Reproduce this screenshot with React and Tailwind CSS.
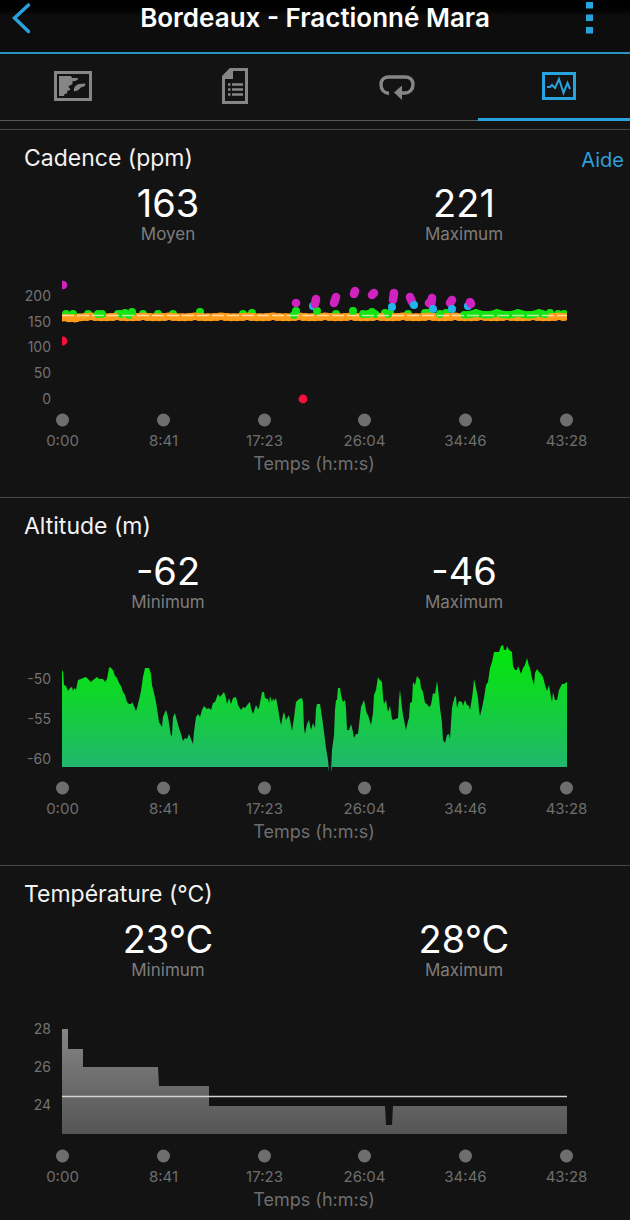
import React from 'react';

const times = ['0:00', '8:41', '17:23', '26:04', '34:46', '43:28'];
const tickX = [62.5, 163.5, 264.5, 364.5, 465.5, 566.5];

const altitude = `63,35 64,50 66,51 68,56 70,53 72,52 73,56 74,53 76,55 78,45 81,44 83,43 86,42 88,44 91,47 93,45 97,42 99,44
103,44 105,47 107,44 109,33 110,32 113,35 115,41 117,43 119,48 121,51 123,57 125,60 127,67 129,69 131,69 132,67 134,71 136,76
137,73 139,65 141,56 143,42 145,33 149,33 151,39 152,50 154,58 156,67 158,80 159,87 162,92 163,82 165,77 166,75 168,82 171,101
172,100 173,82 175,78 177,86 179,93 181,99 183,106 185,103 187,104 189,99 191,104 193,109 194,97 196,82 198,79 200,82 202,75
204,71 207,74 209,73 211,75 213,68 215,67 218,59 220,62 224,57 226,63 227,69 229,63 231,69 233,63 236,62 238,70 241,75 243,72
245,73 248,69 250,67 251,73 253,79 255,73 256,70 258,74 259,73 261,63 262,57 264,57 265,63 268,64 269,68 270,61 272,67 273,63
274,66 276,63 278,73 280,86 281,90 283,80 284,77 286,85 289,80 290,85 292,96 294,83 296,67 299,64 302,63 303,67 304,93 305,99
307,89 309,85 311,95 313,88 315,93 316,74 317,69 320,69 322,82 324,97 326,113 328,125 329,137 331,137 332,115 334,100 335,75
336,65 337,65 338,53 340,53 341,60 343,67 345,65 346,73 347,95 349,95 351,89 353,97 354,103 356,99 358,99 359,90 361,72 364,65
366,75 367,79 368,80 371,90 373,78 374,60 376,55 378,42 379,44 382,47 383,62 384,69 386,65 388,77 390,71 392,84 393,85 398,83
399,65 400,55 402,73 403,80 405,90 406,95 408,86 409,83 410,68 412,67 413,47 415,50 417,41 420,45 421,53 423,57 425,68 427,69
429,72 431,70 433,58 435,59 437,46 438,53 440,73 442,88 443,105 445,108 447,100 449,99 450,104 452,73 453,68 455,61 456,62
457,73 459,66 462,67 463,71 465,65 467,70 469,71 470,75 472,63 473,55 474,44 476,53 478,63 479,75 480,81 482,73 484,63 486,50
488,47 490,33 492,27 494,17 499,17 501,11 503,10 504,15 506,15 507,11 509,15 512,17 513,31 515,35 517,35 518,31 521,39 523,33
525,30 527,23 529,31 530,33 532,43 534,50 535,38 537,34 539,37 541,39 543,42 545,50 547,56 548,53 549,50 551,62 552,67 553,57
555,65 557,65 559,55 562,49 564,49 567,47`;

// green points partly covered by the orange band
const greenBack = [
  [66, 44], [73, 44], [88, 44], [118, 44], [143, 44], [158, 44], [173, 44], [200, 42], [243, 44], [252, 43],
  [336, 44], [385, 43], [390, 43], [408, 44], [425, 43], [428, 43], [446, 43], [550, 43], [558, 44], [564, 44],
];
const greenFront = [
  [98, 44], [102, 44], [121, 44], [125, 43], [129, 45], [132, 42], [296, 41], [294, 45], [317, 41], [353, 41],
  [363, 44], [368, 44], [372, 42], [375, 44], [388, 44], [440, 44],
];
const magenta = [
  '63,15 63,15', '296,33 296,33', '316,29 315,34', '336,27 334,33', '355,21 354,24', '374,23 372,25',
  '394,23 393,30', '410,27 412,32', '432,28 431,34', '429,33 431,33', '452,30 450,33', '470,32 471,34',
];
const blue = [[392, 37], [414, 35], [433, 39], [452, 39]];
const blueBehind = [[313, 36], [468, 36]];
const red = [[63, 71], [303, 129]];

const orange = [];
for (let x = 63; x <= 566; x += 2) {
  const wobble = ((x * x * 7) % 13) / 9;
  orange.push([x, (x < 78 ? 47.5 : 46.3) + wobble]);
}
const greenRun = [];
for (let x = 464; x <= 545; x += 3) {
  greenRun.push([x, 42.8 + ((x * x * 5) % 7) / 3]);
}

const Dots = ({ points, color, r = 4 }) => (
  <g fill={color}>
    {points.map(([x, y], i) => <circle key={i} cx={x} cy={y} r={r} />)}
  </g>
);

const CadencePlot = () => (
  <g transform="translate(0 141)">
    <clipPath id="cadenceClip"><rect x="62" y="0" width="505" height="140" /></clipPath>
    <g clipPath="url(#cadenceClip)">
      <Dots points={blueBehind} color="#22b4ee" />
      <Dots points={greenBack} color="#12e312" />
      <Dots points={orange} color="#ff9c1a" r={3.8} />
      <Dots points={greenFront} color="#12e312" />
      <Dots points={greenRun} color="#12e312" r={3.8} />
      <path d="M62 45.5H567" stroke="#fff3d6" strokeOpacity="0.7" strokeWidth="1.4" strokeDasharray="12 3" />
      {magenta.map((points) => (
        <polyline key={points} points={points} fill="none" stroke="#cf22bf" strokeWidth="8.6" strokeLinecap="round" />
      ))}
      <Dots points={blue} color="#22b4ee" />
      <Dots points={red} color="#fa0f3c" r={4.4} />
    </g>
  </g>
);

const AltitudePlot = () => (
  <g transform="translate(0 138)">
    <defs>
      <linearGradient id="altitudeFill" gradientUnits="userSpaceOnUse" x1="0" y1="10" x2="0" y2="132">
        <stop offset="0" stopColor="#00e808" />
        <stop offset="0.3" stopColor="#0cdb20" />
        <stop offset="1" stopColor="#22b66e" />
      </linearGradient>
    </defs>
    <polygon points={`62,132 62,37 ${altitude} 567,132 332,132 331,137 329,137 328,132`} fill="url(#altitudeFill)" />
  </g>
);

const TemperaturePlot = () => (
  <g>
    <defs>
      <linearGradient id="temperatureFill" x1="0" y1="0" x2="0" y2="1">
        <stop offset="0" stopColor="#858585" />
        <stop offset="1" stopColor="#555555" />
      </linearGradient>
    </defs>
    <path
      d="M62 269V164H68V184H83V202H158L159 221H209V241H385L386 260H392L393 241H567V269Z"
      fill="url(#temperatureFill)"
    />
    <path d="M62 231.5H567" stroke="#d4d4d4" strokeWidth="1.4" />
  </g>
);

const sections = [
  {
    title: 'Cadence (ppm)',
    help: true,
    stats: [['163', 'Moyen'], ['221', 'Maximum']],
    yLabels: [['200', 167], ['150', 193], ['100', 218], ['50', 244], ['0', 270]],
    Plot: CadencePlot,
  },
  {
    title: 'Altitude (m)',
    stats: [['-62', 'Minimum'], ['-46', 'Maximum']],
    yLabels: [['-50', 182], ['-55', 222], ['-60', 262]],
    Plot: AltitudePlot,
  },
  {
    title: 'Température (°C)',
    stats: [['23°C', 'Minimum'], ['28°C', 'Maximum']],
    yLabels: [['28', 164], ['26', 202], ['24', 240]],
    Plot: TemperaturePlot,
  },
];

const Section = ({ title, help, stats, yLabels, Plot }) => (
  <section className="border-t border-[#484848]">
    <div className="flex items-center justify-between pl-6 pr-[6px] pt-3 h-[44px]">
      <h2 className="text-[23px] leading-8 text-[#f2f2f2]">{title}</h2>
      {help && <a href="#aide" className="text-[20px] leading-8 pt-1 text-[#2f9fdc]">Aide</a>}
    </div>

    <dl className="grid grid-cols-2 pl-5 pr-[18px] pt-[9px] h-[76px] text-center">
      {stats.map(([value, label]) => (
        <div key={label} className="flex flex-col-reverse justify-end">
          <dt className="text-[17px] leading-[22px] text-[#7d7d7d]">{label}</dt>
          <dd className="text-[38px] leading-10 text-white">{value}</dd>
        </div>
      ))}
    </dl>

    <svg viewBox="0 121 630 247" className="block w-full" role="img" aria-label={title}>
      <Plot />
      <g fill="#727272" fontSize="14" textAnchor="end">
        {yLabels.map(([text, y]) => <text key={text} x="51" y={y + 5}>{text}</text>)}
      </g>
      {times.map((time, i) => (
        <g key={time} fill="#6e6e6e">
          <circle cx={tickX[i]} cy="291" r="6.5" />
          <text x={tickX[i]} y="317" fontSize="15" textAnchor="middle">{time}</text>
        </g>
      ))}
      <text x="314" y="341" fontSize="18" textAnchor="middle" fill="#6e6e6e">Temps (h:m:s)</text>
    </svg>
  </section>
);

const MapIcon = () => (
  <svg width="38" height="30" viewBox="0 0 38 30">
    <rect x="1.5" y="1.5" width="35" height="27" fill="none" stroke="currentColor" strokeWidth="3" />
    <path
      d="M5 5H17L18 7H24C24.500 9 22 10 18 10.500C19 12 19 13 17 14C14 15 14 16 16 17.500C17 19 15 19.500 13 20C14 22 13 23 10.500 23L10 25H5Z"
      fill="currentColor"
    />
    <path d="M20 20.500C19.500 17 21 14.500 25 13L31 12.500C32 14 31 15.500 28 16C26 16.500 26 18.500 23.500 19.500Z" fill="currentColor" />
  </svg>
);

const NotesIcon = () => (
  <svg width="26" height="36" viewBox="0 0 26 36">
    <path d="M8.5 1.5H24.5V34.5H1.5V8.5Z" fill="none" stroke="currentColor" strokeWidth="3" />
    <path d="M8 1H11V11H1V8Z" fill="currentColor" />
    <path d="M6 16.5H8.5M10 16.5H21M6 21.5H8.5M10 21.5H21M6 26.5H8.5M10 26.5H21" stroke="currentColor" strokeWidth="2.4" />
  </svg>
);

const LapsIcon = () => (
  <svg width="36" height="30" viewBox="0 0 36 30">
    <path
      d="M10 22.5C5 22 2 18.5 2 13.500C2 8.500 5.500 6 10 6H26C30.500 6 34 8.500 34 13.500C34 18.500 30.500 22 26 22H22"
      fill="none"
      stroke="currentColor"
      strokeWidth="3.4"
    />
    <path d="M15 21.500L23 14.500V29Z" fill="currentColor" />
  </svg>
);

const ChartIcon = () => (
  <svg width="34" height="28" viewBox="0 0 34 28">
    <rect x="1.5" y="1.5" width="31" height="25" fill="none" stroke="currentColor" strokeWidth="3" />
    <path d="M5 15H8L10 13L13 16L17 7L21.5 21L25.5 11L28 17" fill="none" stroke="currentColor" strokeWidth="2" />
  </svg>
);

const tabs = [
  { name: 'Carte', Icon: MapIcon },
  { name: 'Statistiques', Icon: NotesIcon },
  { name: 'Circuits', Icon: LapsIcon },
  { name: 'Graphiques', Icon: ChartIcon, active: true },
];

const App = () => {
  return (
    <div className="min-h-screen overflow-hidden bg-[#131313] font-['Inter',sans-serif]">
      {/* Header */}
      <header className="flex items-center justify-between h-[54px] pb-4 pl-3 pr-9 bg-gradient-to-b from-black to-[#0d0d0d] to-30% border-b-2 border-[#2b93c4]">
        <button type="button" aria-label="Retour" className="w-8 text-[#27a3df]">
          <svg width="20" height="32" viewBox="0 0 20 32">
            <path d="M16.5 3L2.5 16L16.5 29.5" fill="none" stroke="currentColor" strokeWidth="3.4" strokeLinecap="round" />
          </svg>
        </button>
        <h1 className="text-[26px] leading-9 font-semibold text-white whitespace-nowrap">Bordeaux - Fractionné Mara</h1>
        <button type="button" aria-label="Menu" className="text-[#27a3df]">
          <svg width="8" height="34" viewBox="0 0 8 34">
            <path d="M0 1H7V7.5H0ZM0 13.5H7V20H0ZM0 26H7V32.5H0Z" fill="currentColor" />
          </svg>
        </button>
      </header>

      {/* Tabs */}
      <nav className="flex -ml-2 -mr-[10px] h-[67px]">
        {tabs.map(({ name, Icon, active }) => (
          <button
            key={name}
            type="button"
            aria-label={name}
            className={`flex-1 flex justify-center items-center ${active
              ? 'border-b-3 border-[#27a3df] text-[#27a3df]'
              : 'border-b border-[#5a5a5a] pb-[2px] text-[#868686]'}`}
          >
            <Icon />
          </button>
        ))}
      </nav>

      <main className="pt-2">
        {sections.map((section) => <Section key={section.title} {...section} />)}
      </main>
    </div>
  );
};

export default App;
